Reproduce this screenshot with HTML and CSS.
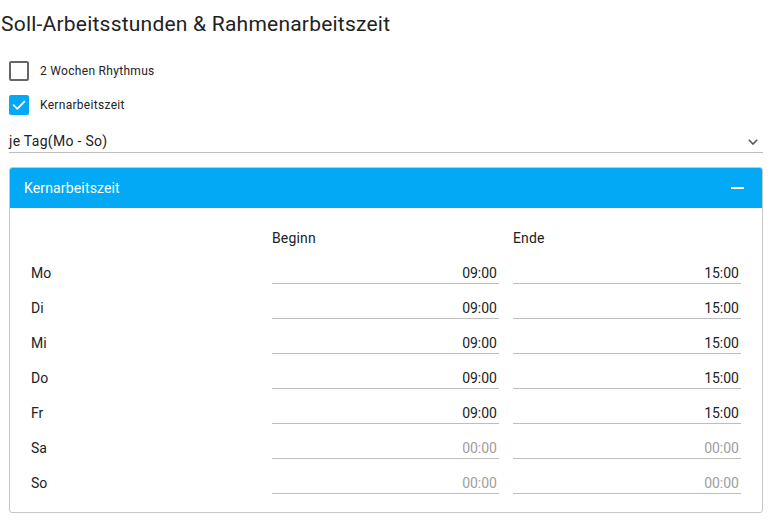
FILE: index.html
```html
<!DOCTYPE html>
<html lang="de">
<head>
<meta charset="utf-8">
<title>Soll-Arbeitsstunden</title>
<link rel="stylesheet" href="styles.css">
</head>
<body>
<div class="page">
  <h1 class="title">Soll-Arbeitsstunden &amp; Rahmenarbeitszeit</h1>

  <label class="check">
    <span class="box"></span>
    <span class="check-label">2 Wochen Rhythmus</span>
  </label>
  <label class="check">
    <span class="box checked">
      <svg viewBox="0 0 20 20" width="20" height="20"><path d="M4.6 10.2 L8.3 13.8 L15.4 6.6" fill="none" stroke="#fff" stroke-width="1.8" stroke-linecap="round" stroke-linejoin="round"/></svg>
    </span>
    <span class="check-label">Kernarbeitszeit</span>
  </label>

  <div class="select">
    <span>je Tag(Mo - So)</span>
    <svg class="chev" viewBox="0 0 10 6" width="10" height="6"><path d="M0.8 0.8 L5 5 L9.2 0.8" fill="none" stroke="#555" stroke-width="1.6"/></svg>
  </div>

  <div class="panel">
    <div class="panel-head">
      <span>Kernarbeitszeit</span>
      <span class="minus"></span>
    </div>
    <div class="panel-body">
      <div class="grid">
        <div class="cell"></div>
        <div class="cell head">Beginn</div>
        <div class="cell head">Ende</div>

        <div class="cell day">Mo</div>
        <div class="field">09:00</div>
        <div class="field">15:00</div>

        <div class="cell day">Di</div>
        <div class="field">09:00</div>
        <div class="field">15:00</div>

        <div class="cell day">Mi</div>
        <div class="field">09:00</div>
        <div class="field">15:00</div>

        <div class="cell day">Do</div>
        <div class="field">09:00</div>
        <div class="field">15:00</div>

        <div class="cell day">Fr</div>
        <div class="field">09:00</div>
        <div class="field">15:00</div>

        <div class="cell day">Sa</div>
        <div class="field empty">00:00</div>
        <div class="field empty">00:00</div>

        <div class="cell day">So</div>
        <div class="field empty">00:00</div>
        <div class="field empty">00:00</div>
      </div>
    </div>
  </div>
</div>
</body>
</html>
```

FILE: styles.css
```css
* { box-sizing: border-box; }

html, body {
  margin: 0;
  padding: 0;
  background: #fff;
}

body {
  font-family: Roboto, "Noto Sans", "Liberation Sans", sans-serif;
  color: #212121;
}

.page {
  padding: 0 8px 0 9px;
}

.title {
  margin: 10px 0 0 -8px;
  font-size: 21px;
  line-height: 28px;
  font-weight: 400;
  letter-spacing: 0.22px;
  color: #222;
}

.check {
  display: flex;
  align-items: center;
  height: 20px;
  gap: 11px;
  margin-top: 23px;
}

.check + .check {
  margin-top: 14px;
}

.box {
  width: 20px;
  height: 20px;
  border: 2px solid #666;
  border-radius: 2px;
  display: flex;
  align-items: center;
  justify-content: center;
  flex: none;
}

.box.checked {
  border: none;
  background: #03a9f4;
}

.check-label {
  font-size: 12px;
  line-height: 20px;
  letter-spacing: 0.3px;
  color: #222;
}

.select {
  margin-top: 16px;
  display: flex;
  align-items: center;
  justify-content: space-between;
  font-size: 14px;
  line-height: 20px;
  letter-spacing: 0.3px;
  padding-bottom: 1px;
  border-bottom: 1px solid #bdbdbd;
  color: #222;
}

.chev {
  margin-right: 5px;
  margin-top: 2px;
}

.panel {
  margin-top: 14px;
  border: 1px solid #c8c8c8;
  border-radius: 3px;
  overflow: hidden;
}

.panel-head {
  height: 40px;
  background: #03a9f4;
  color: #fff;
  display: flex;
  align-items: center;
  justify-content: space-between;
  padding: 0 18px 0 14px;
  font-size: 14px;
  letter-spacing: 0.15px;
}

.minus {
  width: 13px;
  height: 2px;
  background: #fff;
}

.panel-body {
  padding: 20px 21px 18px 21px;
}

.grid {
  display: grid;
  grid-template-columns: 1fr 227px 228px;
  column-gap: 14px;
  row-gap: 14px;
}

.cell,
.field {
  font-size: 14px;
  line-height: 20px;
  height: 21px;
}

.head {
  color: #222;
  letter-spacing: 0.15px;
}

.day {
  color: #222;
}

.field {
  text-align: right;
  padding-right: 2px;
  border-bottom: 1px solid #bdbdbd;
  color: #222;
}

.field.empty {
  color: #9e9e9e;
}
```
